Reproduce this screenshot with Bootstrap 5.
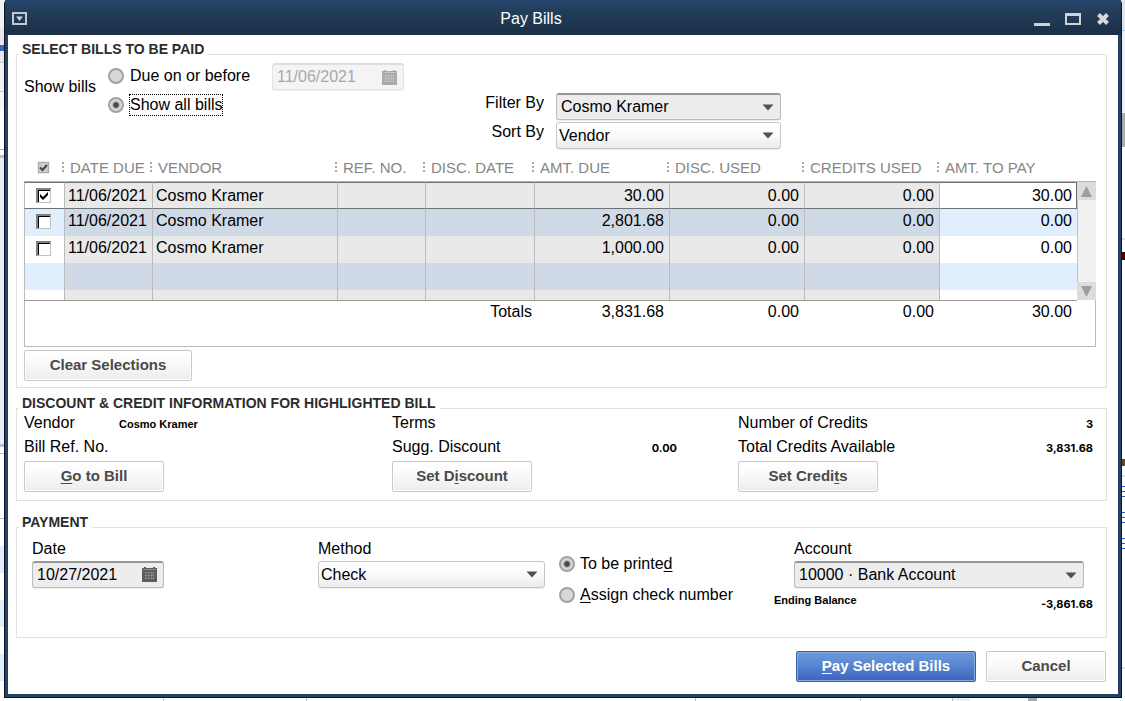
<!DOCTYPE html>
<html lang="en">
<head>
<meta charset="utf-8">
<meta name="viewport" content="width=device-width, initial-scale=1">
<title>Pay Bills</title>
<link href="https://cdn.jsdelivr.net/npm/bootstrap@5.3.0/dist/css/bootstrap.min.css" rel="stylesheet">
<style>
  body { font: 16px/20px "Liberation Sans", Arial, sans-serif; color: #000; background: #fff; }
  /* slivers of the application behind the window */
  .behind-left { width: 4px; flex: none;
    background: linear-gradient(#f2f2f5 0 29px, #e6e6ec 29px 45px, #3a66c0 45px 51px, #e6e6ec 51px 62px, #c9c9cc 62px 63px, #f0f0f6 63px 91px, #ccc 91px 92px, #f4f4fa 92px 111px, #fff 111px 149px, #aaa 149px 150px, #fff 150px 155px, #bcbcdc 155px 158px, #e8edf8 158px 444px, #bcbcdc 444px 447px, #fff 447px 453px, #bbb 453px 454px, #fff 454px 518px, #bbb 518px 519px, #fff 519px 546px, #e0edfc 546px 573px, #fff 573px 600px, #e0edfc 600px 627px, #fff 627px 654px, #e0edfc 654px 681px, #fff 681px); }
  .behind-right { width: 3px; flex: none;
    background: linear-gradient(#e4e4ea 0 30px, #aac4dc 30px 31px, #f0f0f2 31px 113px, #aaa 113px 147px, #fff 147px 238px, #ddd 238px 240px, #fff 240px 252px, #500 252px 260px, #fff 260px 459px, #642 459px 466px, #fff 466px 475px, #ddd 475px 477px, #fff 477px 486px, #3a55b8 486px 487px, #fff 487px 491px, #3a55b8 491px 492px, #fff 492px 496px, #3a55b8 496px 497px, #fff 497px 512px, #3a55b8 512px 513px, #fff 513px 517px, #3a55b8 517px 518px, #fff 518px 522px, #3a55b8 522px 523px, #fff 523px 538px, #3a55b8 538px 539px, #fff 539px 543px, #3a55b8 543px 544px, #fff 544px 548px, #3a55b8 548px 549px, #fff 549px 667px, #ddd 667px 669px, #fff 669px); }
  .behind-bottom { height: 3px; flex: none;
    background: linear-gradient(90deg, #fff 0 163px, #bbb 163px 164px, #fff 164px 306px, #bbb 306px 307px, #fff 307px 695px, #bbb 695px 696px, #fff 696px 860px, #bbb 860px 861px, #fff 861px 952px, #bbb 952px 953px, #eee 953px 970px, #fff 970px 1028px, #aaa 1028px 1037px, #fff 1037px); }
  .win { border: solid #0b1726; border-width: 0 1px 1px; background: #234263; padding: 0 3px 3px; border-radius: 4px 4px 0 0; }
  .titlebar { height: 35px; color: #fff; background: linear-gradient(#25456a, #234060 20%, #1b2f45); margin: 0 -3px; padding: 2px 11px 0 7px; }
  .titlebar button { background: none; border: 0; padding: 0; line-height: 0; display: block; }
  .win-body { background: #fff; padding: 15px 11px 12px 8px; }

  .box { border: 1px solid #e1e1e1; padding: 0 10px 0 7px; min-width: 0; }
  .box > legend { float: none; width: auto; height: 9px; margin: 0 0 0 -5px; padding: 0 4px 0 3px; font-size: 14px; font-weight: bold; color: #2c2c2c; background: #fff; }
  .box > legend span { display: block; line-height: 16px; margin-top: -9px; }
  .box-bills { padding-bottom: 6px; }
  .box-info { margin-top: 16px; padding-bottom: 8px; }
  .box-pay { margin-top: 22px; padding: 7px 22px 23px 15px; }
  .box-pay > legend { margin-left: -13px; }

  .push { height: 31px; padding: 0 8px 2px; font-size: 15px; font-weight: bold; line-height: 20px; color: #4a4a4a; border: 1px solid #c8c8c8; border-radius: 2px; background: linear-gradient(#fff, #fafafa 40%, #ececec); box-shadow: inset 0 0 0 1px #fff; width: 140px; }
  .push-wide { width: 168px; margin-top: 3px; }
  .push-pay { width: 180px; color: #fff; border-color: #3c5f9e; background: linear-gradient(#6f9bdc, #5583cf 50%, #3e62bb); box-shadow: inset 0 0 0 1px #84a8e0; }
  .push-cancel { width: 120px; }
  .push u, .opt u { text-underline-offset: 2px; text-decoration-thickness: 1px; text-decoration-skip-ink: none; }

  .pick { appearance: none; display: block; width: 225px; height: 27px; padding: 0 24px 0 2px; color: #000; border: 1px solid #c6c6c6; border-radius: 3px; font-size: 16px; line-height: 20px;
    background: url("data:image/svg+xml,%3Csvg xmlns='http://www.w3.org/2000/svg' width='12' height='7'%3E%3Cpath d='M0.500 0.500h11l-5.500 6z' fill='%23505050'/%3E%3C/svg%3E") no-repeat right 6px center, linear-gradient(#fff, #fafafa 50%, #ebebeb); box-shadow: 0 1px 1px #eee; }
  .pick-set, .datebox { background-color: #ededed; border: 1px solid #bbb; border-top: 2px solid #979797; border-radius: 3px; box-shadow: 0 1px 1px #eee; }
  .pick-set { background-image: url("data:image/svg+xml,%3Csvg xmlns='http://www.w3.org/2000/svg' width='12' height='7'%3E%3Cpath d='M0.500 0.500h11l-5.500 6z' fill='%23505050'/%3E%3C/svg%3E"); padding: 0 24px 1px 4px; }
  .datebox { width: 132px; height: 27px; padding: 0 6px 1px 4px; }
  .datebox input { border: 0; background: none; padding: 0; width: 90px; line-height: 20px; color: #000; }
  .datebox button { border: 0; background: none; padding: 0; line-height: 0; color: #5c5c5c; }
  .datebox-off { background: #f4f4f4; border: 1px solid #e4e4e4; border-top: 2px solid #dedede; padding-bottom: 0; }
  .datebox-off input { color: #a8a8a8; }
  .datebox-off button { color: #aaa; }

  .dot { appearance: none; flex: none; width: 16px; height: 16px; margin: 0; border: 2px solid #a2a2a2; border-radius: 50%; background: #d8d8d8; }
  .dot:checked { background: radial-gradient(circle, #484848 0 2px, #d4d4d4 4px, #e4e4e4); }
  .opt { gap: 6px; height: 20px; }
  .pay .opt { gap: 5px; }
  .opt .focused { outline: 1px dotted #000; }

  .filters { display: grid; grid-template-columns: 84px 164px 200px 84px auto; padding-bottom: 6px; }
  .show-bills { padding-top: 18px; }
  .when { padding-top: 7px; gap: 9px; }
  .by { padding-top: 34px; }
  .by-labels { gap: 9px; }
  .by-fields { gap: 2px; }

  .bills { width: 100%; table-layout: fixed; border-collapse: separate; border-spacing: 0; }
  .bills thead th { height: 27px; padding: 0 0 0 5px; font-size: 15px; font-weight: normal; line-height: 20px; color: #868686; white-space: nowrap; border-bottom: 1px solid #b4b4b4; }
  .bills thead th:not(:first-child):not(:last-child)::before { content: ""; display: inline-block; width: 2px; height: 10px; margin: 0 6px 0 -7px; background: repeating-linear-gradient(#aaa 0 2px, #fff 2px 4px); vertical-align: 1px; }
  .bills thead th.sel { padding: 0 2px 0 0; text-align: center; }
  .bills tbody td { height: 27px; padding: 0 5px 3px 3px; line-height: 20px; background: #e9e9e9; border-left: 1px solid #bbb; white-space: nowrap; }
  .bills tbody tr:nth-child(even) td { background: #d0dae6; }
  .bills tbody td.open { background: #fff; }
  .bills tbody tr:nth-child(even) td.open { background: #e1eefd; }
  .bills tbody .current td { border-top: 1px solid #6e7373; border-bottom: 1px solid #6e7373; padding-bottom: 0; }
  .bills tbody .current td.last { border-right: 1px solid #6e7373; padding-right: 4px; }
  .bills tbody tr.part td { height: 10px; padding: 0; }
  .bills tbody .current td.bar { padding: 0; border: 0; background: #f1f1f1; vertical-align: top; }
  .bar-in { height: 118px; border-left: 1px solid #c0c0c0; }
  .bar-in button { border: 0; padding: 0; width: 19px; height: 18px; margin-left: -1px; background: #dcdcdc; line-height: 0; }
  .bills tfoot td { height: 47px; padding: 1px 5px 0 0; vertical-align: top; line-height: 20px; border: solid #bbb; border-width: 1px 0; border-top-color: #999; text-align: right; }
  .bills tfoot td:first-child { border-left-width: 1px; padding-right: 2px; }
  .bills tfoot td:last-child { border-right-width: 1px; border-top: 0; }
  .tick { appearance: none; display: block; width: 15px; height: 15px; margin: 0 0 2px 11px; border: 1px solid #c0c0c0; border-top: 2px solid #808080; border-left: 2px solid #808080; background: #fff; box-shadow: inset 1px 1px 0 #000; }
  .tick:checked { background: url("data:image/svg+xml,%3Csvg xmlns='http://www.w3.org/2000/svg' width='12' height='12'%3E%3Cpath d='M2 4v3l3 3L10 5V2L5 7z' fill='%23000'/%3E%3C/svg%3E") #fff; }
  .tick-all { appearance: none; display: inline-block; width: 11px; height: 11px; margin: 0; vertical-align: 0; border: 1px solid #aaa; box-shadow: 0 0 1px #999; background: url("data:image/svg+xml,%3Csvg xmlns='http://www.w3.org/2000/svg' width='9' height='9'%3E%3Cpath d='M1 4.500l2.500 2.500L8 2' fill='none' stroke='%23444' stroke-width='2'/%3E%3C/svg%3E") #ccc; }

  .info { display: grid; grid-template-columns: 368px 346px 1fr; }
  .info-row { height: 24px; }
  .note { font-size: 11px; font-weight: bold; line-height: 20px; }
  .note-num { font: bold 11px/20px Inter, "Liberation Sans", sans-serif; }
  .info-row .note, .info-row .note-num { padding-top: 1px; }
  .info .name { width: 95px; }
  .info .disc { padding-right: 61px; }
  .info .cred { padding-right: 3px; }

  .pay { display: grid; grid-template-columns: 286px 241px 1fr 310px; }
  .pay label { display: block; }
  .pay .datebox, .pay .pick { margin-top: 2px; }
  .pay .opts { padding-top: 15px; gap: 11px; }
  .pay .account { padding: 0 0 0 20px; }
  .pay .balance { margin: 2px -9px 0 -20px; }
  .pay .balance .note-num { padding-top: 4px; }
  .w-method { width: 227px; }
  .w-account { width: 100%; }
  .actions { margin-top: 13px; gap: 10px; padding-right: 1px; }
</style>
</head>
<body class="d-flex flex-column min-vh-100">
<div class="d-flex flex-grow-1">
  <div class="behind-left" aria-hidden="true"></div>
  <main class="win flex-grow-1 d-flex flex-column">
    <header class="titlebar d-flex align-items-center justify-content-between">
      <button type="button" aria-label="Window menu"><svg width="16" height="14" viewBox="0 0 16 14"><rect x="1" y="1" width="13" height="11" fill="none" stroke="#c4c7ca" stroke-width="2"/><path d="M4 4.500h7L7.500 9z" fill="#d4d4d4"/></svg></button>
      <span>Pay Bills</span>
      <div class="d-flex align-items-center">
        <button type="button" aria-label="Minimize"><svg width="31" height="16" viewBox="0 0 31 16"><path d="M0 12h16v3H0z" fill="#d2d2d2"/></svg></button>
        <button type="button" aria-label="Maximize"><svg width="31" height="16" viewBox="0 0 31 16"><path d="M0 2h16v12H0zM2 5v7h12V5z" fill="#d2d2d2" fill-rule="evenodd"/></svg></button>
        <button type="button" aria-label="Close"><svg width="14" height="14" viewBox="0 0 14 14"><path d="M2.500 2.500l9 9M11.500 2.500l-9 9" stroke="#d8d8d8" stroke-width="4"/></svg></button>
      </div>
    </header>
    <div class="win-body flex-grow-1">

      <fieldset class="box box-bills">
        <legend><span>SELECT BILLS TO BE PAID</span></legend>
        <div class="filters">
          <div class="show-bills">Show bills</div>
          <div class="d-flex flex-column when">
            <div class="d-flex align-items-center opt"><input class="dot" type="radio" name="show" id="due"><label for="due">Due on or before</label></div>
            <div class="d-flex align-items-center opt"><input class="dot" type="radio" name="show" id="all" checked><label for="all" class="focused">Show all bills</label></div>
          </div>
          <div class="pt-1">
            <div class="datebox datebox-off d-flex align-items-center justify-content-between">
              <input type="text" value="11/06/2021" aria-label="Due on or before date" disabled>
              <button type="button" aria-label="Choose date" disabled><svg width="15" height="15" viewBox="0 0 15 15"><path d="M0 1h2V0h2v1h7V0h2v1h2v14H0z" fill="currentColor"/><path d="M1 2.500h13" stroke="#fff" stroke-opacity=".3"/><path d="M3 5.500h9M3 8.500h9M3 11.500h9M3.500 5v7M6.500 5v7M9.500 5v7M11.500 5v7" stroke="#fff" stroke-opacity=".2"/></svg></button>
            </div>
          </div>
          <div class="d-flex flex-column by by-labels text-end pe-2 me-1"><label for="filter">Filter By</label><label for="sort">Sort By</label></div>
          <div class="d-flex flex-column by by-fields">
            <select class="pick pick-set" id="filter"><option>Cosmo Kramer</option></select>
            <select class="pick" id="sort"><option>Vendor</option></select>
          </div>
        </div>

        <table class="bills">
          <colgroup><col style="width:40px"><col style="width:88px"><col><col style="width:88px"><col style="width:109px"><col style="width:135px"><col style="width:135px"><col style="width:135px"><col style="width:138px"><col style="width:19px"></colgroup>
          <thead><tr>
            <th class="sel"><input type="checkbox" class="tick-all" aria-label="Select all bills" checked></th>
            <th>DATE DUE</th><th>VENDOR</th><th>REF. NO.</th><th>DISC. DATE</th><th>AMT. DUE</th><th>DISC. USED</th><th>CREDITS USED</th><th>AMT. TO PAY</th><th></th>
          </tr></thead>
          <tbody>
            <tr class="current"><td class="open p-0"><input class="tick mb-0" type="checkbox" aria-label="Pay bill of 30.00" checked></td><td>11/06/2021</td><td>Cosmo Kramer</td><td></td><td></td><td class="text-end">30.00</td><td class="text-end">0.00</td><td class="text-end">0.00</td><td class="open last text-end">30.00</td>
              <td class="bar" rowspan="5"><div class="bar-in d-flex flex-column justify-content-between">
                <button type="button" aria-label="Scroll up"><svg width="11" height="11" viewBox="0 0 11 11"><path d="M5.500 0L11 11H0z" fill="#9e9e9e"/></svg></button>
                <button type="button" aria-label="Scroll down"><svg width="11" height="11" viewBox="0 0 11 11"><path d="M5.500 11L11 0H0z" fill="#9e9e9e"/></svg></button>
              </div></td></tr>
            <tr><td class="open p-0"><input class="tick" type="checkbox" aria-label="Pay bill of 2,801.68"></td><td>11/06/2021</td><td>Cosmo Kramer</td><td></td><td></td><td class="text-end">2,801.68</td><td class="text-end">0.00</td><td class="text-end">0.00</td><td class="open text-end">0.00</td></tr>
            <tr><td class="open p-0"><input class="tick" type="checkbox" aria-label="Pay bill of 1,000.00"></td><td>11/06/2021</td><td>Cosmo Kramer</td><td></td><td></td><td class="text-end">1,000.00</td><td class="text-end">0.00</td><td class="text-end">0.00</td><td class="open text-end">0.00</td></tr>
            <tr><td class="open"></td><td></td><td></td><td></td><td></td><td></td><td></td><td></td><td class="open"></td></tr>
            <tr class="part"><td class="open"></td><td></td><td></td><td></td><td></td><td></td><td></td><td></td><td class="open"></td></tr>
          </tbody>
          <tfoot><tr><td colspan="5">Totals</td><td>3,831.68</td><td>0.00</td><td>0.00</td><td>30.00</td><td></td></tr></tfoot>
        </table>
        <button type="button" class="push push-wide d-block">Clear Selections</button>
      </fieldset>

      <fieldset class="box box-info">
        <legend><span>DISCOUNT &amp; CREDIT INFORMATION FOR HIGHLIGHTED BILL</span></legend>
        <div class="info">
          <div>
            <div class="info-row d-flex"><span class="name">Vendor</span><span class="note">Cosmo Kramer</span></div>
            <div class="info-row">Bill Ref. No.</div>
            <button type="button" class="push"><u>G</u>o to Bill</button>
          </div>
          <div>
            <div class="info-row">Terms</div>
            <div class="info-row d-flex justify-content-between disc"><span>Sugg. Discount</span><span class="note-num">0.00</span></div>
            <button type="button" class="push">Set D<u>i</u>scount</button>
          </div>
          <div>
            <div class="info-row d-flex justify-content-between cred"><span>Number of Credits</span><span class="note-num">3</span></div>
            <div class="info-row d-flex justify-content-between cred"><span>Total Credits Available</span><span class="note-num">3,831.68</span></div>
            <button type="button" class="push">Set Credi<u>t</u>s</button>
          </div>
        </div>
      </fieldset>

      <fieldset class="box box-pay">
        <legend><span>PAYMENT</span></legend>
        <div class="pay">
          <div>
            <label for="paydate">Date</label>
            <div class="datebox d-flex align-items-center justify-content-between">
              <input type="text" id="paydate" value="10/27/2021">
              <button type="button" aria-label="Choose payment date"><svg width="15" height="15" viewBox="0 0 15 15"><path d="M0 1h2V0h2v1h7V0h2v1h2v14H0z" fill="currentColor"/><path d="M1 2.500h13" stroke="#fff" stroke-opacity=".3"/><path d="M3 5.500h9M3 8.500h9M3 11.500h9M3.500 5v7M6.500 5v7M9.500 5v7M11.500 5v7" stroke="#fff" stroke-opacity=".2"/></svg></button>
            </div>
          </div>
          <div>
            <label for="method">Method</label>
            <select class="pick w-method" id="method"><option>Check</option></select>
          </div>
          <div class="d-flex flex-column opts">
            <div class="d-flex align-items-center opt"><input class="dot" type="radio" name="num" id="print" checked><label for="print">To be printe<u>d</u></label></div>
            <div class="d-flex align-items-center opt"><input class="dot" type="radio" name="num" id="assign"><label for="assign"><u>A</u>ssign check number</label></div>
          </div>
          <div class="account">
            <label for="acct">Account</label>
            <select class="pick pick-set w-account" id="acct"><option>10000 · Bank Account</option></select>
            <div class="balance d-flex justify-content-between"><span class="note">Ending Balance</span><span class="note-num">-3,861.68</span></div>
          </div>
        </div>
      </fieldset>

      <div class="actions d-flex justify-content-end">
        <button type="button" class="push push-pay"><u>P</u>ay Selected Bills</button>
        <button type="button" class="push push-cancel">Cancel</button>
      </div>
    </div>
  </main>
  <div class="behind-right" aria-hidden="true"></div>
</div>
<div class="behind-bottom" aria-hidden="true"></div>
<script src="https://cdn.jsdelivr.net/npm/bootstrap@5.3.0/dist/js/bootstrap.bundle.min.js"></script>
</body>
</html>
